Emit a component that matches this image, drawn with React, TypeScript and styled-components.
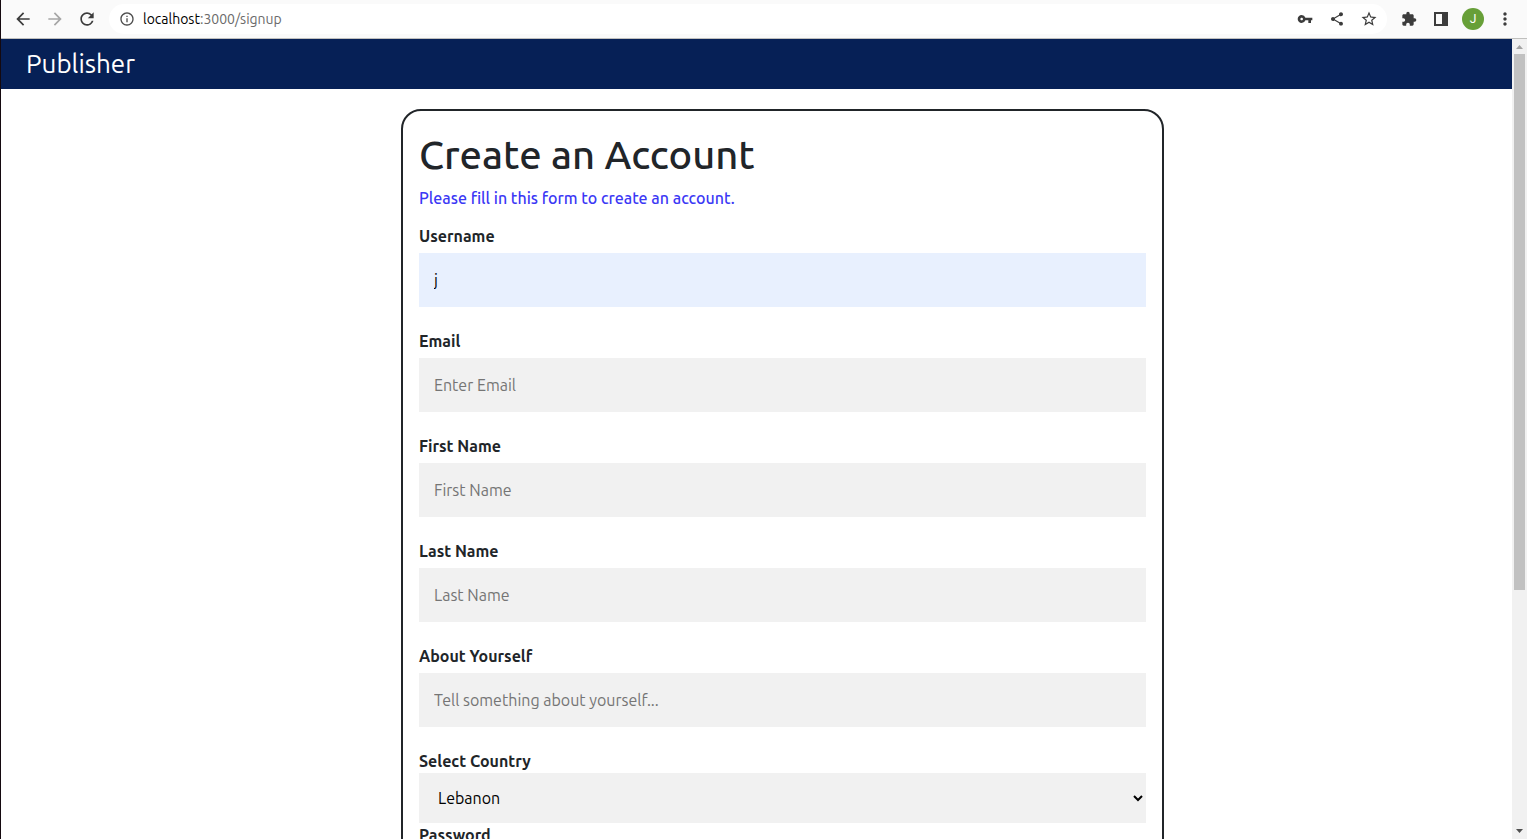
import React from 'react';
import styled, { createGlobalStyle } from 'styled-components';
import {
  MdArrowBack,
  MdArrowForward,
  MdExtension,
  MdInfoOutline,
  MdMoreVert,
  MdRefresh,
  MdShare,
  MdStarBorder,
  MdVpnKey,
} from 'react-icons/md';

const GlobalStyle = createGlobalStyle`
  *, *::before, *::after { box-sizing: border-box; }
  body {
    margin: 0;
    background: #fff;
    color: #212529;
    font-family: Ubuntu, "Noto Sans", sans-serif;
    font-size: 16px;
    line-height: 24px;
  }
`;

const Window = styled.div`
  display: flex;
  flex-direction: column;
  height: 100vh;
  overflow: hidden;
  border-left: 1px solid #14090f;
`;

const Toolbar = styled.div`
  display: flex;
  align-items: center;
  flex: none;
  height: 39px;
  padding: 0 12px;
  background: #fafafa;
  border-bottom: 1px solid #c0c0be;
`;

const NavGroup = styled.div`
  display: flex;
  gap: 12px;
  margin-right: 12px;
`;

const ToolGroup = styled.div`
  display: flex;
  align-items: center;
  gap: 12px;
  margin-left: 12px;
`;

const IconButton = styled.button<{ $muted?: boolean }>`
  display: flex;
  align-items: center;
  justify-content: center;
  width: 20px;
  height: 20px;
  padding: 0;
  border: 0;
  background: none;
  color: ${(p) => (p.$muted ? '#a6a6a6' : '#3c3c3c')};
`;

const AddressBar = styled.div`
  display: flex;
  align-items: center;
  flex: 1;
  height: 30px;
  padding: 0 8px 0 10px;
  border-radius: 15px;
  background: #fff;
  color: #4d4d4d;
  font-size: 14px;
`;

const Url = styled.span`
  flex: 1;
  margin-left: 8px;
  color: #6a6a6a;
`;

const Host = styled.span`
  color: #000;
`;

const Avatar = styled.button`
  width: 22px;
  height: 22px;
  margin: 0 -1px;
  padding: 0;
  border: 0;
  border-radius: 50%;
  background: #679f38;
  color: #fff;
  font: 12px/22px Roboto, sans-serif;
`;

const Body = styled.div`
  display: flex;
  flex: 1;
  min-height: 0;
`;

const Page = styled.div`
  flex: 1;
  overflow: hidden;
`;

const SiteHeader = styled.header`
  display: flex;
  align-items: center;
  height: 50px;
  padding: 0 25px;
  background: #062056;
`;

const Brand = styled.a`
  color: #fff;
  font-size: 26px;
  text-decoration: none;
`;

const Columns = styled.main`
  display: grid;
  grid-template-columns: 400fr 763fr 348fr;
  padding-top: 20px;
`;

const Card = styled.form`
  grid-column: 2;
  padding: 20px 16px;
  border: 2px solid #212529;
  border-radius: 20px;
`;

const Title = styled.h1`
  margin: 0 0 7px;
  font-size: 40px;
  font-weight: 500;
  line-height: 48px;
`;

const Intro = styled.p`
  margin: 0 0 14px;
  color: #3b38f5;
  font-weight: 500;
`;

const Label = styled.label`
  display: block;
  font-weight: 700;
`;

const TextInput = styled.input<{ $filled?: boolean }>`
  display: block;
  width: 100%;
  height: 54px;
  margin: 5px 0 22px;
  padding: 15px;
  border: 0;
  border-radius: 0;
  background: ${(p) => (p.$filled ? '#e8f0fe' : '#f1f1f1')};
  color: #000;
  font: inherit;

  &::placeholder {
    color: #757575;
    opacity: 1;
  }
`;

const Select = styled.select`
  display: block;
  width: 100%;
  height: 50px;
  padding: 0 0 0 15px;
  border: 0;
  border-radius: 0;
  background: #f1f1f1;
  color: #000;
  font: inherit;
`;

const Scrollbar = styled.div`
  display: flex;
  flex-direction: column;
  flex: none;
  width: 15px;
  background: #f1f1f1;
`;

const ScrollArrow = styled.svg`
  display: block;
  flex: none;
  width: 15px;
  height: 15px;
`;

const Track = styled.div`
  flex: 1;
  padding: 0 2px;
`;

const Thumb = styled.div`
  height: 69.6%;
  background: #c1c1c1;
`;

const fields = [
  { id: 'username', label: 'Username', placeholder: 'Enter Username', value: 'j' },
  { id: 'email', label: 'Email', placeholder: 'Enter Email' },
  { id: 'first-name', label: 'First Name', placeholder: 'First Name' },
  { id: 'last-name', label: 'Last Name', placeholder: 'Last Name' },
  { id: 'about', label: 'About Yourself', placeholder: 'Tell something about yourself...' },
];

function BrowserToolbar() {
  return (
    <Toolbar>
      <NavGroup>
        <IconButton aria-label="Back"><MdArrowBack size={20} /></IconButton>
        <IconButton aria-label="Forward" $muted><MdArrowForward size={20} /></IconButton>
        <IconButton aria-label="Reload"><MdRefresh size={22} /></IconButton>
      </NavGroup>
      <AddressBar>
        <MdInfoOutline size={16} />
        <Url><Host>localhost</Host>:3000/signup</Url>
        <ToolGroup>
          <IconButton aria-label="Passwords"><MdVpnKey size={16} /></IconButton>
          <IconButton aria-label="Share"><MdShare size={16} /></IconButton>
          <IconButton aria-label="Bookmark"><MdStarBorder size={18} /></IconButton>
        </ToolGroup>
      </AddressBar>
      <ToolGroup>
        <IconButton aria-label="Extensions"><MdExtension size={16} /></IconButton>
        <IconButton aria-label="Side panel">
          <svg width="14" height="14" viewBox="0 0 14 14">
            <path fill="currentColor" fillRule="evenodd" d="M0 0h14v14H0zM2 2v10h6V2z" />
          </svg>
        </IconButton>
        <Avatar aria-label="Profile">J</Avatar>
        <IconButton aria-label="Menu"><MdMoreVert size={20} /></IconButton>
      </ToolGroup>
    </Toolbar>
  );
}

export default function App() {
  return (
    <Window>
      <GlobalStyle />
      <BrowserToolbar />
      <Body>
        <Page>
          <SiteHeader><Brand href="#">Publisher</Brand></SiteHeader>
          <Columns>
            <Card>
              <Title>Create an Account</Title>
              <Intro>Please fill in this form to create an account.</Intro>
              {fields.map((f) => (
                <React.Fragment key={f.id}>
                  <Label htmlFor={f.id}>{f.label}</Label>
                  <TextInput
                    id={f.id}
                    placeholder={f.placeholder}
                    defaultValue={f.value}
                    $filled={Boolean(f.value)}
                  />
                </React.Fragment>
              ))}
              <Label htmlFor="country">Select Country</Label>
              <Select id="country" defaultValue="Lebanon">
                <option>Lebanon</option>
              </Select>
              <Label htmlFor="password">Password</Label>
              <TextInput id="password" type="password" placeholder="Enter Password" />
            </Card>
          </Columns>
        </Page>
        <Scrollbar aria-hidden="true">
          <ScrollArrow viewBox="0 0 15 15"><path fill="#a3a3a3" d="M4 10l3.500-4 3.500 4z" /></ScrollArrow>
          <Track><Thumb /></Track>
          <ScrollArrow viewBox="0 0 15 15"><path fill="#505050" d="M4 5l3.500 4 3.500-4z" /></ScrollArrow>
        </Scrollbar>
      </Body>
    </Window>
  );
}
